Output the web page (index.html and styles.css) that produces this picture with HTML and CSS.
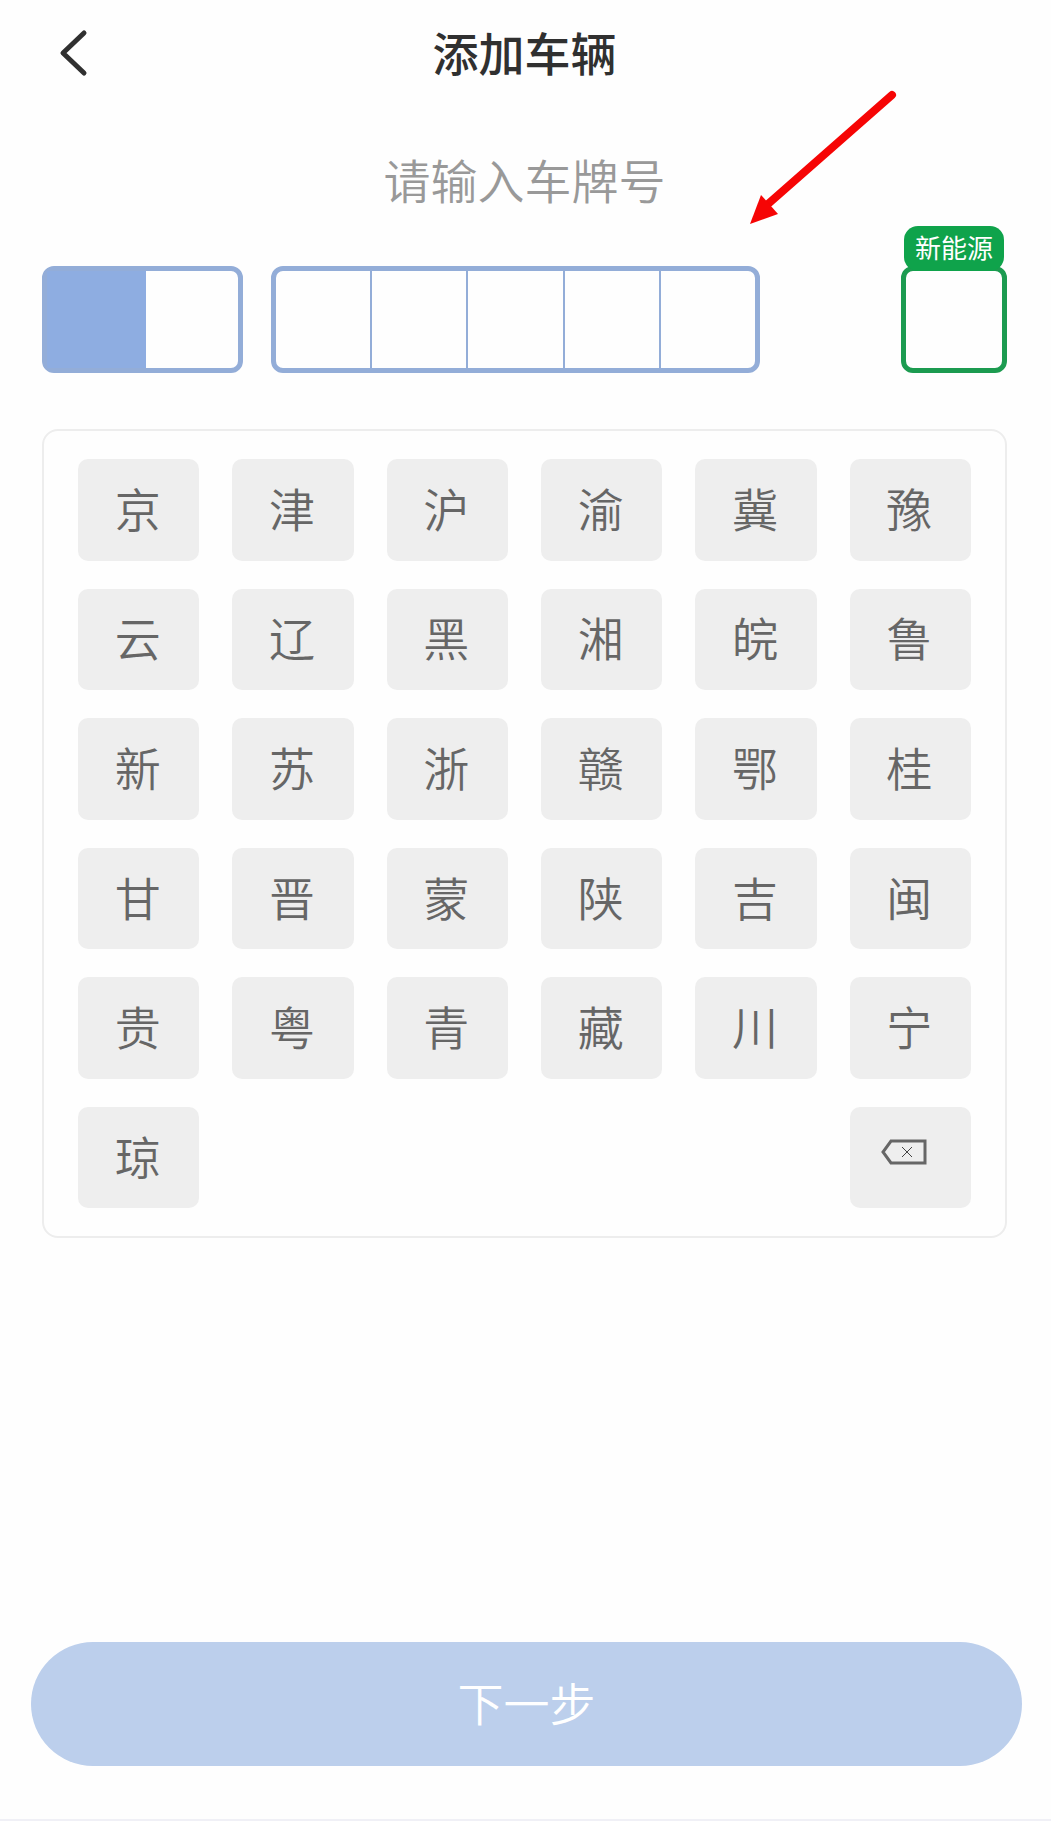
FILE: index.html
```html
<!DOCTYPE html>
<html lang="zh-CN">
<head>
  <meta charset="UTF-8">
  <meta name="viewport" content="width=device-width, initial-scale=1">
  <title>添加车辆</title>
  <link rel="stylesheet" href="styles.css">
</head>
<body>
  <header class="navbar">
    <button class="back" type="button" aria-label="返回">
      <svg width="32" height="48" viewBox="0 0 32 48"><path d="M26 4 5 24 26 44"/></svg>
    </button>
    <h1>添加车辆</h1>
  </header>

  <main class="content">
    <p class="hint">请输入车牌号</p>

    <div class="plate">
      <div class="plate-group plate-region">
        <input class="cell active" type="text" maxlength="1" aria-label="省份" readonly>
        <input class="cell" type="text" maxlength="1" aria-label="城市代码" readonly>
      </div>
      <div class="plate-group plate-number">
        <input class="cell" type="text" maxlength="1" aria-label="第1位" readonly>
        <input class="cell" type="text" maxlength="1" aria-label="第2位" readonly>
        <input class="cell" type="text" maxlength="1" aria-label="第3位" readonly>
        <input class="cell" type="text" maxlength="1" aria-label="第4位" readonly>
        <input class="cell" type="text" maxlength="1" aria-label="第5位" readonly>
      </div>
      <div class="plate-group plate-energy">
        <label class="badge" for="energy">新能源</label>
        <input class="cell" id="energy" type="text" maxlength="1" readonly>
      </div>
      <svg class="arrow" width="160" height="140" viewBox="0 0 160 140" aria-hidden="true">
        <path class="arrow-line" d="M152 9 28 118"/>
        <path class="arrow-head" d="M10 138 21 109 38 128Z"/>
      </svg>
    </div>

    <div class="keyboard">
      <button class="key" type="button">京</button>
      <button class="key" type="button">津</button>
      <button class="key" type="button">沪</button>
      <button class="key" type="button">渝</button>
      <button class="key" type="button">冀</button>
      <button class="key" type="button">豫</button>
      <button class="key" type="button">云</button>
      <button class="key" type="button">辽</button>
      <button class="key" type="button">黑</button>
      <button class="key" type="button">湘</button>
      <button class="key" type="button">皖</button>
      <button class="key" type="button">鲁</button>
      <button class="key" type="button">新</button>
      <button class="key" type="button">苏</button>
      <button class="key" type="button">浙</button>
      <button class="key" type="button">赣</button>
      <button class="key" type="button">鄂</button>
      <button class="key" type="button">桂</button>
      <button class="key" type="button">甘</button>
      <button class="key" type="button">晋</button>
      <button class="key" type="button">蒙</button>
      <button class="key" type="button">陕</button>
      <button class="key" type="button">吉</button>
      <button class="key" type="button">闽</button>
      <button class="key" type="button">贵</button>
      <button class="key" type="button">粤</button>
      <button class="key" type="button">青</button>
      <button class="key" type="button">藏</button>
      <button class="key" type="button">川</button>
      <button class="key" type="button">宁</button>
      <button class="key" type="button">琼</button>
      <button class="key key-delete" type="button" aria-label="删除">
        <svg width="60" height="44" viewBox="0 0 60 44">
          <path class="delete-box" d="M12 8H46V30H12L4 19Z"/>
          <path class="delete-cross" d="M23 14 33 24M33 14 23 24"/>
        </svg>
      </button>
    </div>
  </main>

  <footer class="footer">
    <button class="next" type="button">下一步</button>
  </footer>
</body>
</html>
```

FILE: styles.css
```css
* {
  box-sizing: border-box;
}

body {
  margin: 0;
  min-height: 100vh;
  display: flex;
  flex-direction: column;
  background: #fefefe;
  border-bottom: 2px solid #f0f0f6;
  font-family: "Noto Sans CJK SC", sans-serif;
}

button,
input {
  margin: 0;
  padding: 0;
  border: 0;
  font-family: inherit;
}

.navbar {
  display: grid;
  grid-template-columns: 60px 1fr 60px;
  align-items: center;
  height: 106px;
  padding: 0 46px 0 44px;
}

.back {
  display: flex;
  justify-content: center;
  background: none;
}

.back path {
  fill: none;
  stroke: #303030;
  stroke-width: 5;
  stroke-linecap: round;
  stroke-linejoin: round;
}

h1 {
  margin: 0;
  padding-bottom: 4px;
  text-align: center;
  font-size: 46px;
  line-height: 60px;
  font-weight: 500;
  color: #303030;
}

.content {
  padding: 0 44px 0 42px;
}

.hint {
  margin: 41px 0 55px;
  text-align: center;
  font-size: 47px;
  line-height: 64px;
  font-weight: 350;
  color: #999;
}

.plate {
  position: relative;
  display: grid;
  grid-template-columns: minmax(0, 201fr) minmax(0, 489fr) minmax(0, 219fr);
  gap: 28px;
}

.plate-group {
  position: relative;
  display: flex;
  height: 107px;
  border: 5px solid #93add8;
  border-radius: 12px;
}

.cell {
  flex: 1;
  width: 0;
  min-width: 0;
  background: transparent;
  text-align: center;
  font-size: 46px;
  color: #333;
}

.plate-number .cell:not(:last-child) {
  border-right: 2px solid #93add8;
}

.cell.active {
  flex-grow: 1.08;
  background: #8eade1;
}

.plate-energy {
  justify-self: end;
  width: 106px;
  border-color: #1c9b50;
}

.badge {
  position: absolute;
  left: -2px;
  right: -2px;
  bottom: 97px;
  height: 45px;
  border-radius: 14px;
  background: #0fa34b;
  color: #fff;
  text-align: center;
  font-size: 26px;
  line-height: 42px;
  white-space: nowrap;
}

.arrow {
  position: absolute;
  right: 107px;
  bottom: 147px;
}

.arrow-line {
  fill: none;
  stroke: #f60505;
  stroke-width: 8;
  stroke-linecap: round;
}

.arrow-head {
  fill: #f60505;
}

.keyboard {
  display: grid;
  grid-template-columns: repeat(6, 1fr);
  gap: 28px 33px;
  margin-top: 56px;
  padding: 28px 34px;
  border: 2px solid #ededed;
  border-radius: 16px;
}

.key {
  display: flex;
  align-items: center;
  justify-content: center;
  aspect-ratio: 43 / 36;
  padding: 0 2px 6px 0;
  border-radius: 10px;
  background: #eee;
  color: #666;
  font-size: 46px;
  line-height: 60px;
  font-weight: 350;
}

.key-delete {
  grid-column: 6;
}

.key-delete path {
  fill: none;
  stroke: #666;
}

.delete-box {
  stroke-width: 3;
}

.key-delete .delete-cross {
  stroke: #444;
  stroke-width: 1;
}

.footer {
  margin-top: auto;
  padding: 40px 29px 53px 31px;
}

.next {
  width: 100%;
  height: 124px;
  padding-bottom: 6px;
  border-radius: 62px;
  background: #bccfec;
  color: #fff;
  font-size: 46px;
  line-height: 60px;
  font-weight: 350;
}
```
